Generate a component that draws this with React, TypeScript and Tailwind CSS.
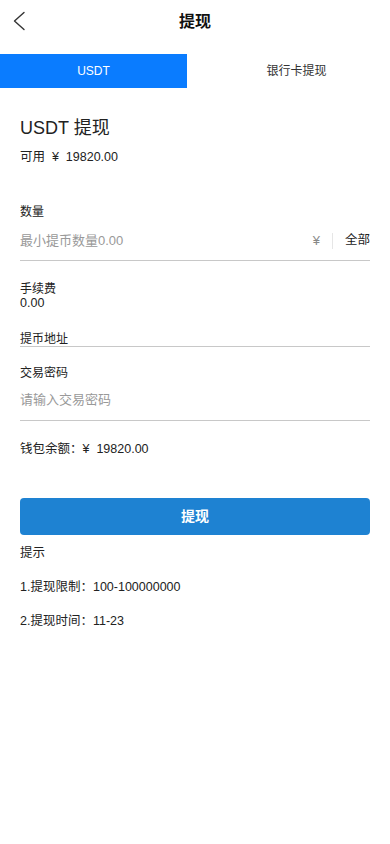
import React from "react";

export default function App() {
  return (
    <div
      className="w-[390px] min-h-[844px] bg-white text-[#222]"
      style={{ fontFamily: '"Liberation Sans", "Noto Sans CJK SC", sans-serif' }}
    >
      <div className="relative h-[44px] flex items-center justify-center">
        <svg
          className="absolute left-0 top-0"
          width="40"
          height="44"
          viewBox="0 0 40 44"
          fill="none"
        >
          <polyline
            points="24,12.5 14.5,21 24,29.5"
            stroke="#333"
            strokeWidth="1.4"
            strokeLinecap="round"
            strokeLinejoin="round"
          />
        </svg>
        <span className="text-[16px] font-bold text-[#111]">提现</span>
      </div>

      <div className="mt-[10px] flex h-[34px]">
        <div className="w-[187px] bg-[#0a7cff] flex items-center justify-center text-white text-[12px]">
          USDT
        </div>
        <div className="flex-1 flex items-center justify-center text-[12px] text-[#333] pl-[16px]">
          银行卡提现
        </div>
      </div>

      <div className="px-5">
        <div className="mt-[26px] text-[18px] leading-[28px] text-[#222] whitespace-pre">USDT 提现</div>
        <div className="mt-[6px] text-[12.5px] leading-[18px] whitespace-pre">可用  ¥  19820.00</div>

        <div className="mt-[37px] text-[12px] leading-[18px]">数量</div>
        <div className="flex items-center h-[40px] border-b border-[#c8c8c8]">
          <span className="flex-1 text-[13px] text-[#999]">最小提币数量0.00</span>
          <span className="text-[13px] text-[#888]">¥</span>
          <span className="mx-[12px] w-px h-[16px] bg-[#e6e6e6]"></span>
          <span className="text-[12.5px] text-[#222]">全部</span>
        </div>

        <div className="mt-[21px] text-[12px] leading-[14px]">手续费</div>
        <div className="text-[12.5px] leading-[14px]">0.00</div>

        <div className="mt-[22px] text-[12px] leading-[14px] border-b border-[#c8c8c8]">提币地址</div>

        <div className="mt-[19px] text-[12px] leading-[14px]">交易密码</div>
        <div className="flex items-center h-[41px] border-b border-[#c8c8c8]">
          <span className="text-[13px] text-[#999]">请输入交易密码</span>
        </div>

        <div className="mt-[19px] text-[12.5px] leading-[18px] whitespace-pre">钱包余额：¥  19820.00</div>

        <button className="mt-[40px] w-full h-[37px] rounded-[4px] bg-[#1e82d2] text-white text-[14px] font-semibold flex items-center justify-center">
          提现
        </button>

        <div className="mt-[9px] text-[12.5px] leading-[18px]">提示</div>
        <div className="mt-[16px] text-[12.5px] leading-[18px]">1.提现限制：100-100000000</div>
        <div className="mt-[16px] text-[12.5px] leading-[18px]">2.提现时间：11-23</div>
      </div>
    </div>
  );
}
